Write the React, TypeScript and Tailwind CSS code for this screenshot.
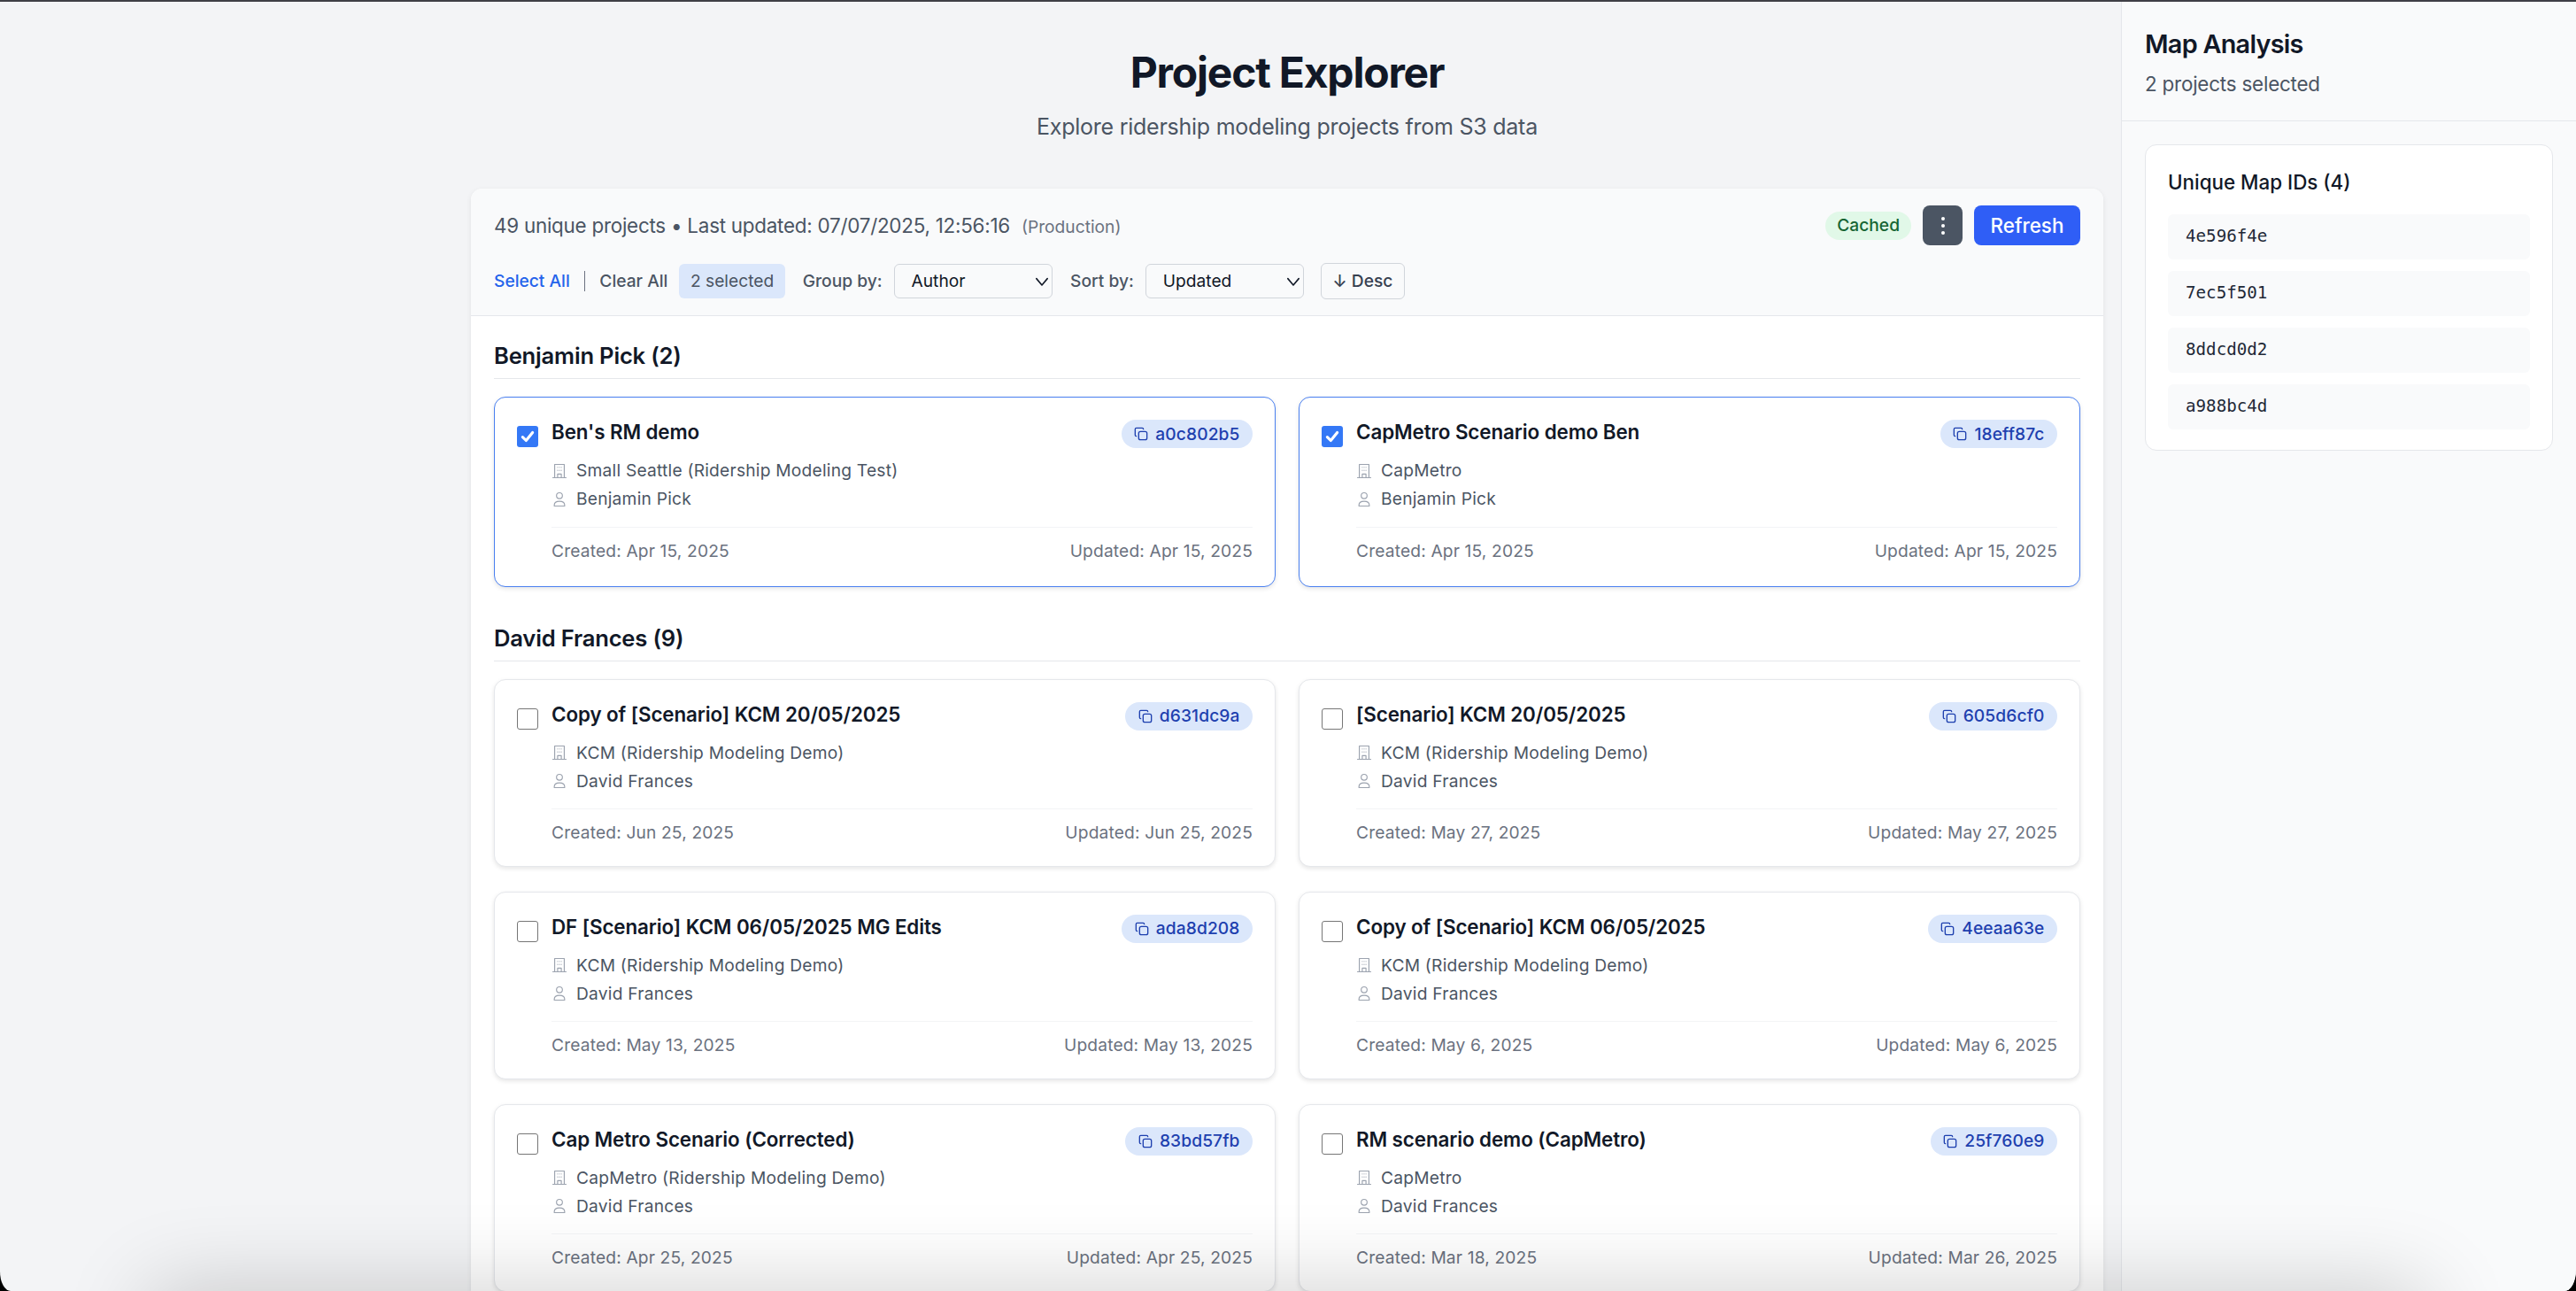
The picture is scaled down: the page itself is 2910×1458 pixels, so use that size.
const mono = "font-['DejaVu_Sans_Mono',monospace]";

function CopyIcon() {
  return (
    <svg viewBox="0 0 24 24" className="h-[16px] w-[16px] shrink-0" fill="none" stroke="currentColor" strokeWidth="2" strokeLinecap="round" strokeLinejoin="round">
      <rect x="8" y="8" width="14" height="14" rx="3" />
      <path d="M4 16c-1.1 0-2-.9-2-2V4c0-1.1.9-2 2-2h10c1.1 0 2 .9 2 2" />
    </svg>
  );
}

function BuildingIcon() {
  return (
    <svg viewBox="0 0 24 24" className="-ml-[1.5px] h-[20px] w-[20px] shrink-0 text-[#9ca3af]" fill="none" stroke="currentColor" strokeWidth="1.4" strokeLinecap="round" strokeLinejoin="round">
      <path d="M3 21h18M5.5 21V3h13v18M9.5 21v-5h5v5" />
      <path d="M9.5 7h.01M12 7h.01M14.5 7h.01M9.5 11h.01M12 11h.01M14.5 11h.01" />
    </svg>
  );
}

function PersonIcon() {
  return (
    <svg viewBox="0 0 24 24" className="-ml-[1.5px] h-[20px] w-[20px] shrink-0 text-[#9ca3af]" fill="none" stroke="currentColor" strokeWidth="1.4" strokeLinecap="round" strokeLinejoin="round">
      <circle cx="12" cy="7" r="4" />
      <path d="M5 21v-1.5C5 16.5 8 14.5 12 14.5s7 2 7 5V21z" />
    </svg>
  );
}

function Chevron() {
  return (
    <svg viewBox="0 0 16 16" className="h-[18px] w-[18px] text-[#111827]" fill="none" stroke="currentColor" strokeWidth="1.4" strokeLinecap="round" strokeLinejoin="round">
      <path d="M2.5 5 8 11.5 13.5 5" />
    </svg>
  );
}

type P = { t: string; id: string; org: string; a: string; c: string; u: string; sel?: boolean };

function Card({ p }: { p: P }) {
  return (
    <div className={`flex flex-col rounded-[13px] border-[1.6px] bg-white px-[25px] shadow-[0_2px_5px_rgba(0,0,0,0.1)] ${p.sel ? "border-[#4a80f0] pt-[25px] pb-[28.2px]" : "border-[#e5e7eb] pt-[25px] pb-[25.5px]"}`}>
      <div className="flex gap-[15px]">
        {p.sel ? (
          <div className="mt-[7px] flex h-[24px] w-[24px] shrink-0 items-center justify-center rounded-[3px] bg-[#3478f6]">
            <svg viewBox="0 0 16 16" className="h-[18px] w-[18px] text-white" fill="none" stroke="currentColor" strokeWidth="2.8" strokeLinecap="round" strokeLinejoin="round">
              <path d="M3 8.5 6.5 12 13 4" />
            </svg>
          </div>
        ) : (
          <div className="mt-[7px] h-[24px] w-[24px] shrink-0 rounded-[3px] border-[1.6px] border-[#767676] bg-white" />
        )}
        <div className="min-w-0 flex-1">
          <div className="flex items-start justify-between">
            <div className="text-[22.4px] leading-[28px] font-semibold tracking-[-0.1px] text-[#111827]">{p.t}</div>
            <div className="flex h-[32px] items-center gap-[8px] rounded-full bg-[#dbe7fb] px-[14.5px] text-[19.2px] font-medium tracking-[0.1px] text-[#1e40af]">
              <CopyIcon />
              <span>{p.id}</span>
            </div>
          </div>
          <div className="mt-[9.5px] flex h-[32px] items-center gap-[9.5px] text-[19.2px] tracking-[0.22px] text-[#4b5563]">
            <BuildingIcon />
            <span>{p.org}</span>
          </div>
          <div className="flex h-[32px] items-center gap-[9.5px] text-[19.2px] tracking-[0.22px] text-[#4b5563]">
            <PersonIcon />
            <span>{p.a}</span>
          </div>
          <div className="mt-[15px] flex items-center justify-between border-t-[1.6px] border-[#f3f4f6] pt-[14px] text-[19.2px] leading-[24px] tracking-[0.15px] text-[#6b7280]">
            <span>Created: {p.c}</span>
            <span>Updated: {p.u}</span>
          </div>
        </div>
      </div>
    </div>
  );
}

const KCM = "KCM (Ridership Modeling Demo)";
const DF = "David Frances";
const ben: P[] = [
  { t: "Ben's RM demo", id: "a0c802b5", org: "Small Seattle (Ridership Modeling Test)", a: "Benjamin Pick", c: "Apr 15, 2025", u: "Apr 15, 2025", sel: true },
  { t: "CapMetro Scenario demo Ben", id: "18eff87c", org: "CapMetro", a: "Benjamin Pick", c: "Apr 15, 2025", u: "Apr 15, 2025", sel: true },
];
const david: P[] = [
  { t: "Copy of [Scenario] KCM 20/05/2025", id: "d631dc9a", org: KCM, a: DF, c: "Jun 25, 2025", u: "Jun 25, 2025" },
  { t: "[Scenario] KCM 20/05/2025", id: "605d6cf0", org: KCM, a: DF, c: "May 27, 2025", u: "May 27, 2025" },
  { t: "DF [Scenario] KCM 06/05/2025 MG Edits", id: "ada8d208", org: KCM, a: DF, c: "May 13, 2025", u: "May 13, 2025" },
  { t: "Copy of [Scenario] KCM 06/05/2025", id: "4eeaa63e", org: KCM, a: DF, c: "May 6, 2025", u: "May 6, 2025" },
  { t: "Cap Metro Scenario (Corrected)", id: "83bd57fb", org: "CapMetro (Ridership Modeling Demo)", a: DF, c: "Apr 25, 2025", u: "Apr 25, 2025" },
  { t: "RM scenario demo (CapMetro)", id: "25f760e9", org: "CapMetro", a: DF, c: "Mar 18, 2025", u: "Mar 26, 2025" },
];

function Select({ label }: { label: string }) {
  return (
    <div className="flex h-[39px] w-[179px] items-center justify-between rounded-[6px] border-[1.6px] border-[#d1d5db] bg-[#f9fafb] pl-[19px] pr-[2px] text-[19.2px] text-[#111827]">
      <span>{label}</span>
      <Chevron />
    </div>
  );
}

function Group({ title, items }: { title: string; items: P[] }) {
  return (
    <section className="mb-[42px]">
      <h2 className="flex h-[42px] items-start border-b-[1.6px] border-[#e5e7eb] text-[25.6px] leading-[32px] font-semibold tracking-[-0.2px] text-[#111827]">{title}</h2>
      <div className="mt-[20px] grid grid-cols-2 gap-x-[26px] gap-y-[28px]">
        {items.map((p) => (
          <Card key={p.id} p={p} />
        ))}
      </div>
    </section>
  );
}

export default function App() {
  return (
    <div className="h-[1458px] w-[2910px] bg-black">
      <div className="relative flex h-full w-full overflow-hidden rounded-bl-[12px_22px] rounded-br-[13px_24px] bg-[#f3f4f6] font-['Inter',sans-serif]">
        <main className="min-w-0 flex-1 pl-[532px] pr-[20px]">
          <header className="flex h-[213px] flex-col items-center pt-[52px]">
            <h1 className="text-[48px] leading-[60px] font-bold tracking-[-1.2px] text-[#111827]">Project Explorer</h1>
            <p className="mt-[13px] text-[25px] leading-[36px] tracking-[-0.25px] text-[#4b5563]">Explore ridership modeling projects from S3 data</p>
          </header>
          <div className="rounded-t-[13px] bg-white shadow-[0_2px_6px_rgba(0,0,0,0.08)]">
            <div className="h-[144px] rounded-t-[13px] border-b-[1.6px] border-[#e5e7eb] bg-[#f9fafb] px-[26px] pt-[19px]">
              <div className="flex h-[45px] items-center justify-between">
                <div className="flex items-baseline">
                  <span className="text-[22.4px] tracking-[-0.24px] text-[#4b5563]">49 unique projects • Last updated: 07/07/2025, 12:56:16</span>
                  <span className="ml-[13px] text-[19.2px] text-[#6b7280]">(Production)</span>
                </div>
                <div className="flex items-center gap-[13px]">
                  <div className="flex h-[32px] items-center rounded-full bg-[#e1f8e8] px-[13px] text-[19.2px] font-medium text-[#166534]">Cached</div>
                  <div className="flex h-[45px] w-[45px] items-center justify-center rounded-[8px] bg-[#4b5563]">
                    <div className="flex flex-col gap-[4px]">
                      <div className="h-[4px] w-[4px] rounded-full bg-white" />
                      <div className="h-[4px] w-[4px] rounded-full bg-white" />
                      <div className="h-[4px] w-[4px] rounded-full bg-white" />
                    </div>
                  </div>
                  <div className="flex h-[45px] w-[120px] items-center justify-center rounded-[8px] bg-[#2f5ef6] text-[22.4px] font-medium text-white">Refresh</div>
                </div>
              </div>
              <div className="mt-[20px] flex h-[41px] items-center text-[19.2px]">
                <span className="font-medium text-[#2563eb]">Select All</span>
                <span className="ml-[16px] mr-[16px] h-[23px] w-[1.6px] bg-[#6b7280]" />
                <span className="font-medium text-[#4b5563]">Clear All</span>
                <span className="ml-[12.5px] flex h-[39px] items-center rounded-[6px] bg-[#dbe7fb] px-[13px] text-[#4b5563]">2 selected</span>
                <span className="ml-[19.5px] mr-[13px] font-medium text-[#4b5563]">Group by:</span>
                <Select label="Author" />
                <span className="ml-[20.5px] mr-[13px] font-medium text-[#4b5563]">Sort by:</span>
                <Select label="Updated" />
                <div className="ml-[19px] flex h-[41px] w-[95px] items-center justify-center rounded-[6px] border-[1.6px] border-[#d1d5db] font-medium text-[#374151]">↓ Desc</div>
              </div>
            </div>
            <div className="px-[26px] pt-[29px]">
              <Group title="Benjamin Pick (2)" items={ben} />
              <Group title="David Frances (9)" items={david} />
            </div>
          </div>
        </main>
        <aside className="h-full w-[514px] shrink-0 border-l-[1.6px] border-[#e5e7eb] bg-[#f9fafb]">
          <div className="h-[137px] border-b-[1.6px] border-[#e5e7eb] px-[26px] pt-[32px]">
            <h2 className="text-[28.8px] leading-[36px] font-semibold tracking-[-0.72px] text-[#111827]">Map Analysis</h2>
            <p className="mt-[13px] text-[22.4px] leading-[28px] tracking-[-0.2px] text-[#4b5563]">2 projects selected</p>
          </div>
          <div className="px-[26px] pt-[26px]">
            <div className="rounded-[13px] border-[1.6px] border-[#e5e7eb] bg-white px-[25px] pt-[28px] pb-[23.5px]">
              <h3 className="text-[22.4px] leading-[28px] font-medium text-[#111827]">Unique Map IDs (4)</h3>
              <div className="mt-[21.5px] flex flex-col gap-[13px]">
                {["4e596f4e", "7ec5f501", "8ddcd0d2", "a988bc4d"].map((id) => (
                  <div key={id} className={`flex h-[51px] items-center rounded-[6px] bg-[#f9fafb] px-[20px] text-[19.2px] text-[#1f2937] ${mono}`}>{id}</div>
                ))}
              </div>
            </div>
          </div>
        </aside>
        {/* window chrome overlays */}
        <div className="pointer-events-none absolute inset-x-0 top-0 h-[2px] bg-[#3f3f46]" />
        <div className="pointer-events-none absolute left-[170px] right-[170px] top-full h-[100px] shadow-[0_0_100px_rgba(0,0,0,0.2)]" />
      </div>
    </div>
  );
}
